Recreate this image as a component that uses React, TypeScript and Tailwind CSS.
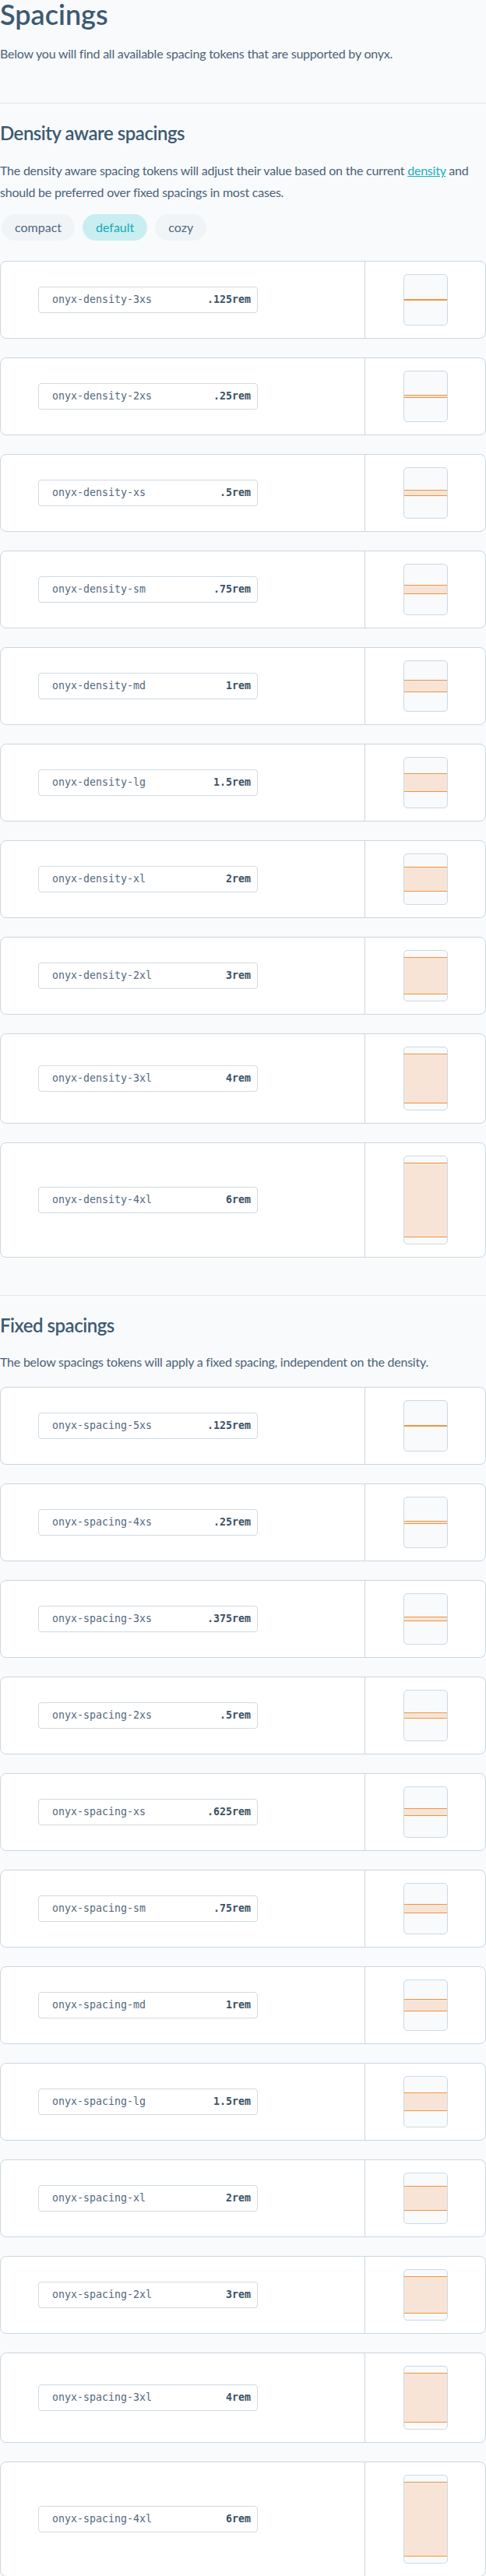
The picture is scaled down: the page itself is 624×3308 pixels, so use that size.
import React from "react";

type Token = { name: string; value: string; px: number };

const density: Token[] = [
  { name: "onyx-density-3xs", value: ".125rem", px: 2 },
  { name: "onyx-density-2xs", value: ".25rem", px: 4 },
  { name: "onyx-density-xs", value: ".5rem", px: 8 },
  { name: "onyx-density-sm", value: ".75rem", px: 12 },
  { name: "onyx-density-md", value: "1rem", px: 16 },
  { name: "onyx-density-lg", value: "1.5rem", px: 24 },
  { name: "onyx-density-xl", value: "2rem", px: 32 },
  { name: "onyx-density-2xl", value: "3rem", px: 48 },
  { name: "onyx-density-3xl", value: "4rem", px: 64 },
  { name: "onyx-density-4xl", value: "6rem", px: 96 },
];

const fixed: Token[] = [
  { name: "onyx-spacing-5xs", value: ".125rem", px: 2 },
  { name: "onyx-spacing-4xs", value: ".25rem", px: 4 },
  { name: "onyx-spacing-3xs", value: ".375rem", px: 6 },
  { name: "onyx-spacing-2xs", value: ".5rem", px: 8 },
  { name: "onyx-spacing-xs", value: ".625rem", px: 10 },
  { name: "onyx-spacing-sm", value: ".75rem", px: 12 },
  { name: "onyx-spacing-md", value: "1rem", px: 16 },
  { name: "onyx-spacing-lg", value: "1.5rem", px: 24 },
  { name: "onyx-spacing-xl", value: "2rem", px: 32 },
  { name: "onyx-spacing-2xl", value: "3rem", px: 48 },
  { name: "onyx-spacing-3xl", value: "4rem", px: 64 },
  { name: "onyx-spacing-4xl", value: "6rem", px: 96 },
];

const sans = "font-['Lato','Noto_Sans',sans-serif]";

function TokenCard({ t }: { t: Token }) {
  return (
    <div className="flex rounded-lg border border-[#cad7e1] bg-white">
      <div className="flex flex-1 items-center pl-12">
        <div className="flex h-[34px] w-[282px] items-center justify-between rounded-[4px] border border-[#cfdbe4] bg-white pl-[17px] pr-[8px] font-['DejaVu_Sans_Mono','Liberation_Mono',monospace] text-[13.3px]">
          <span className="text-[#54697d]">{t.name}</span>
          <span className="font-semibold text-[#3c5266]">{t.value}</span>
        </div>
      </div>
      <div className="flex w-[155px] items-center justify-center border-l border-[#cad7e1] py-4">
        <div className="flex min-h-[66px] w-[57px] items-center rounded-[5px] border border-[#cdd9e3] bg-[#f8fafc] py-2">
          <div
            className="w-full border-y border-[#f0943f] bg-[#f8e4d6]"
            style={{ height: t.px }}
          />
        </div>
      </div>
    </div>
  );
}

export default function App() {
  return (
    <div className={`min-h-screen bg-[#f9fafc] text-[#4b6277] ${sans}`}>
      <h1 className="-mt-[2px] text-[36px] font-semibold leading-[40px] text-[#3d5a72]">
        Spacings
      </h1>
      <p className="mt-[17px] text-[16px] leading-7 tracking-[-0.014em]">
        Below you will find all available spacing tokens that are supported by onyx.
      </p>

      <div className="mt-[49px] border-t border-[#e1e8ef]">
        <h2 className="mt-[22px] text-[24px] font-semibold leading-8 tracking-[-0.02em] text-[#3d5a72]">
          Density aware spacings
        </h2>
        <p className="mt-[18px] text-[16px] leading-7 tracking-[-0.014em]">
          The density aware spacing tokens will adjust their value based on the current{" "}
          <a className="text-[#1ab0bc] underline" href="#">
            density
          </a>{" "}
          and should be preferred over fixed spacings in most cases.
        </p>
        <div className="mt-[14px] flex gap-[10px] pl-[2px]">
          <button className="h-[34px] rounded-full bg-[#f1f4f7] px-[17px] text-[16px] text-[#50687f]">
            compact
          </button>
          <button className="h-[34px] rounded-full bg-[#c9eef1] px-[17px] text-[16px] text-[#17a9b5]">
            default
          </button>
          <button className="h-[34px] rounded-full bg-[#f1f4f7] px-[17px] text-[16px] text-[#50687f]">
            cozy
          </button>
        </div>
        <div className="mt-[26px] flex flex-col gap-6">
          {density.map((t) => (
            <TokenCard key={t.name} t={t} />
          ))}
        </div>
      </div>

      <div className="mt-[48px] border-t border-[#e1e8ef]">
        <h2 className="mt-[22px] text-[24px] font-semibold leading-8 tracking-[-0.02em] text-[#3d5a72]">
          Fixed spacings
        </h2>
        <p className="mt-[17px] text-[16px] leading-7 tracking-[-0.014em]">
          The below spacings tokens will apply a fixed spacing, independent on the density.
        </p>
        <div className="mt-[18px] flex flex-col gap-6">
          {fixed.map((t) => (
            <TokenCard key={t.name} t={t} />
          ))}
        </div>
      </div>
    </div>
  );
}
